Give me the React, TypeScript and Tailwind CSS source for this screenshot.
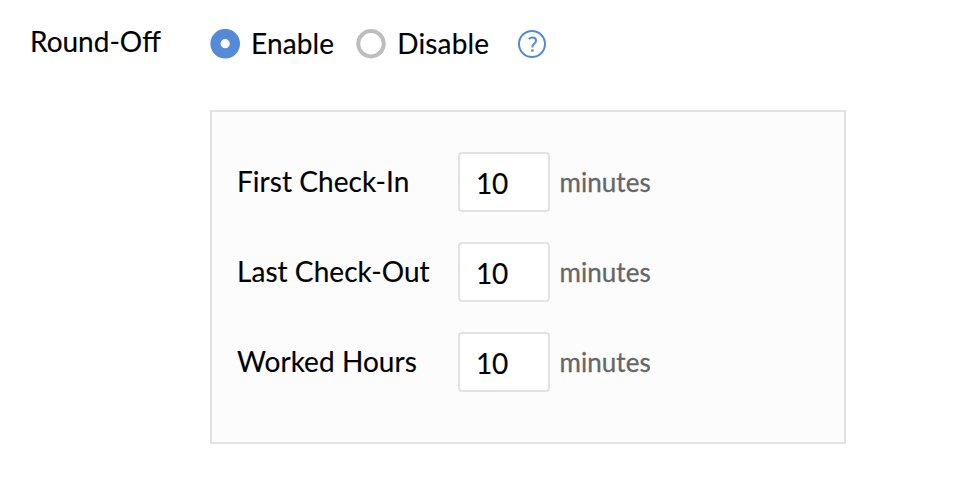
import { useState } from 'react';

const fields = [
  { id: 'checkIn', label: 'First Check-In' },
  { id: 'checkOut', label: 'Last Check-Out' },
  { id: 'worked', label: 'Worked Hours' },
];

function Radio({ label, checked, onChange }: { label: string; checked: boolean; onChange: () => void }) {
  return (
    <label className="flex items-center whitespace-nowrap">
      <input type="radio" name="roundOff" className="sr-only" checked={checked} onChange={onChange} />
      <svg width="30" height="30" viewBox="0 0 30 30" fill="#fff">
        {checked ? (
          <circle cx="15.2" cy="14.7" r="9.7" stroke="#558ad8" strokeWidth="10.2" />
        ) : (
          <circle cx="15" cy="14.7" r="12.7" stroke="#bdbdbd" strokeWidth="4" />
        )}
      </svg>
      <span className="ml-[11px] pb-0.5 tracking-[0.15px]">{label}</span>
    </label>
  );
}

function HelpIcon() {
  return (
    <svg width="30" height="30" viewBox="0 0 30 30" fill="none" stroke="#558ad8" strokeWidth="2">
      <circle cx="15" cy="15" r="13" />
      <path d="M11.9 10.1c.9-1 2-1.5 3.5-1.5 2.2 0 3.6 1.2 3.6 3.1 0 2.9-3.6 3-3.6 5.9v1" />
      <path d="M14.2 21.5h2.4" strokeWidth="2.4" />
    </svg>
  );
}

export default function App() {
  const [enabled, setEnabled] = useState(true);
  const [minutes, setMinutes] = useState<Record<string, string>>({ checkIn: '10', checkOut: '10', worked: '10' });

  return (
    <div className="h-[486px] w-[964px] bg-white font-['Lato',sans-serif] text-[28px] leading-[34px] text-black [-webkit-text-stroke:0.15px]">
      <div className="flex pl-[30px] pt-6">
        <div className="w-[180px] shrink-0">Round-Off</div>
        <div className="pt-px">
          <div className="flex h-[38px] items-center">
            <Radio label="Enable" checked={enabled} onChange={() => setEnabled(true)} />
            <div className="ml-[22px]">
              <Radio label="Disable" checked={!enabled} onChange={() => setEnabled(false)} />
            </div>
            <button type="button" aria-label="Help" className="ml-7">
              <HelpIcon />
            </button>
          </div>

          <div className="mt-[47px] flex h-[334px] w-[636px] flex-col gap-[30px] border-2 border-[#e2e2e2] bg-[#fcfcfc] pl-[25px] pt-10">
            {fields.map(({ id, label }) => (
              <div key={id} className="flex h-[60px] items-center">
                <label htmlFor={id} className="w-[221px] pb-0.5 tracking-[0.05px]">{label}</label>
                <input
                  id={id}
                  value={minutes[id]}
                  onChange={(e) => setMinutes({ ...minutes, [id]: e.target.value })}
                  className="h-[60px] w-[92px] rounded-[4px] border-2 border-[#e2e2e2] bg-white pl-4 pt-0.5 tracking-[-0.3px] outline-none"
                />
                <span className="ml-[9.5px] text-[26px] tracking-[0.05px] text-[#666] [-webkit-text-stroke:0.3px]">minutes</span>
              </div>
            ))}
          </div>
        </div>
      </div>
    </div>
  );
}
